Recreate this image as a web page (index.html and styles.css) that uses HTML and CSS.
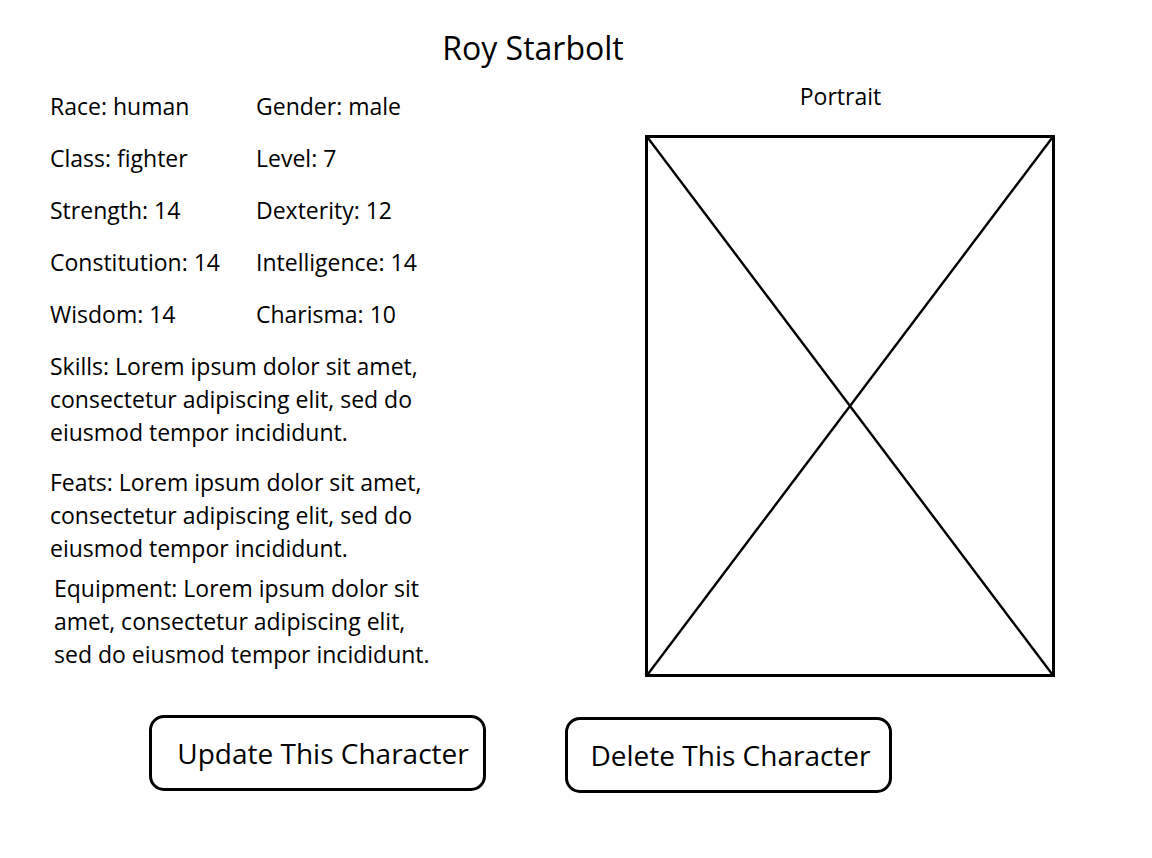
FILE: index.html
```html
<!DOCTYPE html>
<html lang="en">
<head>
<meta charset="utf-8">
<title>Roy Starbolt</title>
<link rel="stylesheet" href="styles.css">
</head>
<body>
<div class="page">
  <header class="header">
    <h1 class="title">Roy Starbolt</h1>
  </header>
  <main class="main">
    <section class="info">
      <div class="stats">
        <div class="stat">Race: human</div>
        <div class="stat">Gender: male</div>
        <div class="stat">Class: fighter</div>
        <div class="stat">Level: 7</div>
        <div class="stat">Strength: 14</div>
        <div class="stat">Dexterity: 12</div>
        <div class="stat">Constitution: 14</div>
        <div class="stat">Intelligence: 14</div>
        <div class="stat">Wisdom: 14</div>
        <div class="stat">Charisma: 10</div>
      </div>
      <p class="desc desc-skills">Skills: Lorem ipsum dolor sit amet, consectetur adipiscing elit, sed do eiusmod tempor incididunt.</p>
      <p class="desc desc-feats">Feats: Lorem ipsum dolor sit amet, consectetur adipiscing elit, sed do eiusmod tempor incididunt.</p>
      <p class="desc desc-equipment">Equipment: Lorem ipsum dolor sit amet, consectetur adipiscing elit, sed do eiusmod tempor incididunt.</p>
    </section>
    <section class="portrait">
      <div class="portrait-label">Portrait</div>
      <div class="portrait-box">
        <svg class="portrait-x" viewBox="0 0 100 100" preserveAspectRatio="none">
          <line x1="0" y1="0" x2="100" y2="100" vector-effect="non-scaling-stroke"/>
          <line x1="100" y1="0" x2="0" y2="100" vector-effect="non-scaling-stroke"/>
        </svg>
      </div>
    </section>
  </main>
  <div class="actions">
    <button class="btn btn-update">Update This Character</button>
    <button class="btn btn-delete">Delete This Character</button>
  </div>
</div>
</body>
</html>
```

FILE: styles.css
```css
html, body {
  margin: 0;
  padding: 0;
  background: #ffffff;
}

body {
  font-family: "Open Sans", "Lato", sans-serif;
  color: #000000;
}

.page {
  width: 1152px;
  height: 858px;
  box-sizing: border-box;
  padding-top: 30px;
}

.header {
  display: flex;
  justify-content: center;
  padding-right: 86px;
}

.title {
  margin: 0;
  font-size: 32px;
  font-weight: 400;
  line-height: 36px;
}

.main {
  display: flex;
  margin-top: 14px;
}

.info {
  width: 400px;
  padding-left: 50px;
}

.stats {
  display: grid;
  grid-template-columns: 206px auto;
  grid-auto-rows: 52px;
  align-items: center;
  font-size: 23px;
  line-height: 30px;
}

.desc {
  margin: 0;
  font-size: 23px;
  line-height: 33px;
  width: 392px;
}

.desc-skills {
  margin-top: 10px;
}

.desc-feats {
  margin-top: 17px;
}

.desc-equipment {
  margin-top: 7px;
  padding-left: 4px;
}

.portrait {
  margin-left: 195px;
  width: 409px;
  display: flex;
  flex-direction: column;
  align-items: center;
}

.portrait-label {
  font-size: 23px;
  line-height: 30px;
  margin-top: 1px;
  margin-right: 18px;
}

.portrait-box {
  margin-top: 24px;
  width: 410px;
  height: 542px;
  box-sizing: border-box;
  border: 3px solid #000000;
}

.portrait-x {
  display: block;
  width: 100%;
  height: 100%;
}

.portrait-x line {
  stroke: #000000;
  stroke-width: 2.4;
}

.actions {
  display: flex;
  gap: 79px;
  padding-left: 149px;
  margin-top: 38px;
  align-items: flex-start;
}

.btn {
  font-family: "Open Sans", "Lato", sans-serif;
  font-size: 28px;
  color: #000000;
  background: #ffffff;
  border: 3px solid #000000;
  border-radius: 15px;
  height: 76px;
  box-sizing: border-box;
  padding: 0;
}

.btn-update {
  width: 337px;
  padding-left: 11px;
}

.btn-delete {
  width: 327px;
  margin-top: 2px;
  padding-left: 4px;
}
```
